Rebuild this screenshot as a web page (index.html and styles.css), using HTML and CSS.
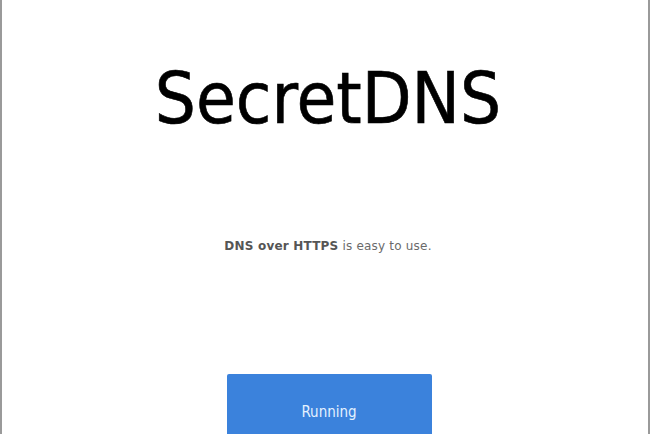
FILE: index.html
```html
<!DOCTYPE html>
<html>
<head>
  <meta charset="utf-8">
  <title>SecretDNS</title>
  <link rel="stylesheet" href="styles.css">
</head>
<body>
<div id="window">
  <h1 class="title">SecretDNS</h1>
  <p class="tagline"><b>DNS over HTTPS</b> is easy to use.</p>
  <button class="status">Running</button>
</div>
</body>
</html>
```

FILE: styles.css
```css
html, body {
  height: 100%;
  margin: 0;
}
body {
  background-color: #ffffff;
  font-family: "DejaVu Sans", Tahoma, sans-serif;
  overflow: hidden;
}

#window {
  height: 100%;
  box-sizing: border-box;
  border-left: 2px solid #9a9a9a;
  border-right: 2px solid #9a9a9a;
  padding-left: 6px;
  display: flex;
  flex-direction: column;
  align-items: center;
}

.title {
  margin: 54px 0 0 0;
  font-family: "DejaVu Sans Condensed", "DejaVu Sans", sans-serif;
  font-weight: normal;
  font-size: 72px;
  line-height: 88px;
  color: #000000;
  -webkit-text-stroke: 0.6px #000000;
}

.tagline {
  margin: 96px 0 0 0;
  font-size: 12px;
  line-height: 16px;
  letter-spacing: 0.2px;
  color: #6a6a6a;
}
.tagline b {
  color: #555555;
}

.status {
  margin: 120px 0 0 2px;
  width: 205px;
  height: 80px;
  flex-shrink: 0;
  border: none;
  border-radius: 2px;
  background: #3b82dc;
  color: #e4f1ff;
  font-family: "DejaVu Sans Condensed", "DejaVu Sans", sans-serif;
  font-size: 15px;
  padding: 0 0 4px 0;
}
```
